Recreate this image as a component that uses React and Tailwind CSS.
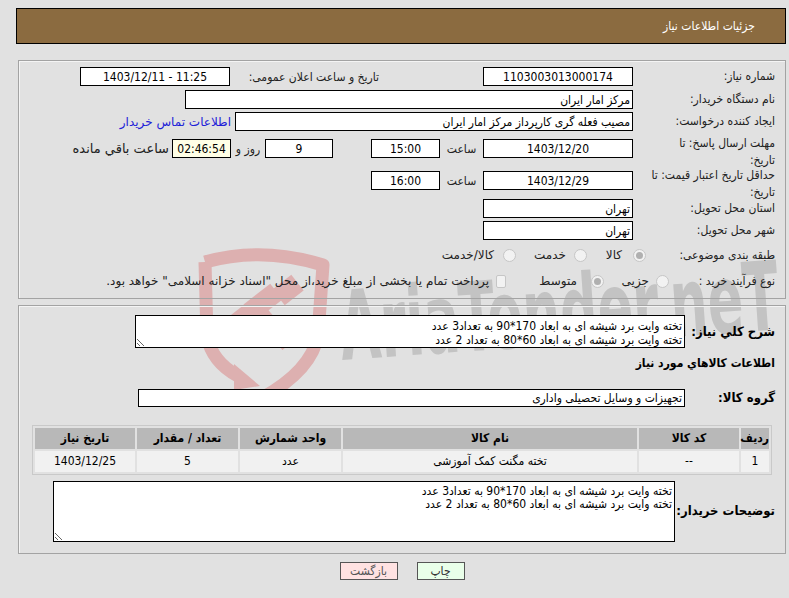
import React from "react";

const F = { fontFamily: '"DejaVu Sans Condensed","DejaVu Sans",sans-serif' };
const W = { fontFamily: '"DejaVu Sans",sans-serif' };

function Box({ w, children, center = true, bg = "bg-white", h = "h-[19px]", ltr = false }) {
  return (
    <div
      dir={ltr ? "ltr" : undefined}
      className={`${w} ${h} ${bg} border border-black flex items-center shrink-0 whitespace-nowrap overflow-hidden text-[12px] text-black ${center ? "justify-center" : "justify-start pr-[2px]"}`}
    >
      {children}
    </div>
  );
}

function Radio({ checked }) {
  return (
    <span className="w-[13px] h-[13px] rounded-full border border-[#c6c6c6] bg-[#f2f2f2] flex items-center justify-center shrink-0">
      {checked ? <span className="w-[7px] h-[7px] rounded-full bg-[#b0b0b0]" /> : null}
    </span>
  );
}

function Label({ children, className = "" }) {
  return (
    <div className={`w-[142px] shrink-0 text-[12px] text-[#222] leading-[17px] ${className}`}>{children}</div>
  );
}

/* watermark: svg placed at page (190,240); local coords = page - (190,240) */
function Watermark() {
  const c = "#ddb0b0";
  return (
    <svg
      dir="ltr"
      style={{ direction: "ltr" }}
      className="absolute left-[190px] top-[240px] pointer-events-none"
      width="600"
      height="190"
      viewBox="0 0 600 190"
    >
      <g fill="none" stroke={c} strokeWidth="13" strokeLinejoin="round" strokeLinecap="butt">
        <path d="M15 22 Q72 6 133 25 L128 95 Q122 130 72 158" />
        <path d="M15 22 L17 96 Q22 122 48 136" />
      </g>
      <path d="M44 124 L70 146 L44 150 Z" fill={c} />
      <g fill={c}>
        <rect x="38" y="70" width="26" height="20" transform="rotate(-38 51 80)" />
        <rect x="56" y="52" width="34" height="20" transform="rotate(-38 73 62)" />
        <rect x="86" y="40" width="24" height="20" transform="rotate(-38 98 50)" />
        <rect x="60" y="80" width="46" height="15" transform="rotate(50 83 88)" />
      </g>
      <text
        x="152"
        y="120"
        textAnchor="start"
        textLength="440"
        lengthAdjust="spacingAndGlyphs"
        fill="#c3c3c3"
        fontFamily="DejaVu Sans Condensed, DejaVu Sans, sans-serif"
        fontWeight="bold"
        fontSize="96"
        transform="rotate(-4 152 120)"
      >
        AriaTender.neT
      </text>
    </svg>
  );
}

export default function App() {
  return (
    <div
      dir="rtl"
      style={F}
      className="relative w-[789px] h-[598px] bg-[#e1e1e1] overflow-hidden text-[12px] text-[#222]"
    >
      <Watermark />
      <div className="relative">
        {/* Header */}
        <div className="mt-[8px] ml-[16px] mr-[3px] h-[36px] bg-[#8b6b40] border border-black flex items-center pr-[30px] text-white text-[12px]">
          جزئیات اطلاعات نیاز
        </div>

        {/* Panel 1 */}
        <div className="mt-[16px] ml-[18px] mr-[3px] h-[239px] border border-[#a3a3a3] shadow-[inset_1px_1px_0_#f4f4f4] pr-[10px] flex flex-col">
          <div className="mt-[6px] h-[19px] flex items-center">
            <Label>شماره نیاز:</Label>
            <Box w="w-[150px]">1103003013000174</Box>
            <div className="mr-[104px] w-[149px] shrink-0 whitespace-nowrap">تاریخ و ساعت اعلان عمومی:</div>
            <Box w="w-[150px]" ltr>1403/12/11 - 11:25</Box>
          </div>
          <div className="mt-[4px] h-[19px] flex items-center">
            <Label>نام دستگاه خریدار:</Label>
            <Box w="w-[448px]" center={false}>مرکز امار ایران</Box>
          </div>
          <div className="mt-[3px] h-[19px] flex items-center">
            <Label>ایجاد کننده درخواست:</Label>
            <Box w="w-[398px]" center={false}>مصیب فعله گری کارپرداز مرکز امار ایران</Box>
            <span className="mr-[4px] text-[#2020d8] whitespace-nowrap" style={W}>اطلاعات تماس خریدار</span>
          </div>
          <div className="mt-[8px] h-[28px] flex items-start">
            <Label className="-mt-[4px]">
              مهلت ارسال پاسخ: تا
              <br />
              تاریخ:
            </Label>
            <Box w="w-[150px]">1403/12/20</Box>
            <div className="w-[43px] h-[19px] flex items-center justify-center shrink-0">ساعت</div>
            <Box w="w-[69px]">15:00</Box>
            <div className="mr-[38px]" />
            <Box w="w-[68px]">9</Box>
            <div className="w-[34px] h-[19px] flex items-center justify-center shrink-0">روز و</div>
            <Box w="w-[59px]" bg="bg-[#ffffe6]">02:46:54</Box>
            <div className="mr-[3px] h-[19px] flex items-center whitespace-nowrap text-[13px]" style={W}>ساعت باقي مانده</div>
          </div>
          <div className="mt-[4px] h-[26px] flex items-start">
            <Label className="-mt-[4px]">
              حداقل تاریخ اعتبار قیمت: تا
              <br />
              تاریخ:
            </Label>
            <Box w="w-[150px]">1403/12/29</Box>
            <div className="w-[43px] h-[19px] flex items-center justify-center shrink-0">ساعت</div>
            <Box w="w-[69px]">16:00</Box>
          </div>
          <div className="mt-[2px] h-[19px] flex items-center">
            <Label>استان محل تحویل:</Label>
            <Box w="w-[150px]" center={false}>تهران</Box>
          </div>
          <div className="mt-[3px] h-[19px] flex items-center">
            <Label>شهر محل تحویل:</Label>
            <Box w="w-[150px]" center={false}>تهران</Box>
          </div>
          <div className="mt-[6px] h-[18px] flex items-center">
            <div className="w-[129px] shrink-0 whitespace-nowrap">طبقه بندی موضوعی:</div>
            <Radio checked />
            <span className="mr-[11px] w-[35px] shrink-0" style={W}>کالا</span>
            <Radio />
            <span className="mr-[8px] w-[50px] shrink-0" style={W}>خدمت</span>
            <Radio />
            <span className="mr-[9px] whitespace-nowrap" style={W}>کالا/خدمت</span>
          </div>
          <div className="mt-[8px] h-[18px] flex items-center">
            <div className="shrink-0 w-[106px] whitespace-nowrap">نوع فرآیند خرید :</div>
            <Radio />
            <span className="mr-[7px] w-[45px] shrink-0" style={W}>جزیی</span>
            <Radio checked />
            <span className="mr-[14px] w-[71px] shrink-0" style={W}>متوسط</span>
            <span className="w-[10px] h-[13px] rounded-[2px] border border-[#c6c6c6] bg-[#f2f2f2] shrink-0" />
            <span className="mr-[7px] whitespace-nowrap" style={W}>
              پرداخت تمام یا بخشی از مبلغ خرید،از محل "اسناد خزانه اسلامی" خواهد بود.
            </span>
          </div>
        </div>

        {/* Panel 2 */}
        <div className="mt-[6px] ml-[18px] mr-[3px] h-[249px] border border-[#a3a3a3] shadow-[inset_1px_1px_0_#f4f4f4] pr-[10px] flex flex-col">
          <div className="mt-[9px] flex items-center">
            <div className="w-[90px] shrink-0 font-bold text-[13px] text-black">شرح کلي نياز:</div>
            <textarea
              readOnly
              dir="rtl"
              className="w-[550px] h-[33px] border border-black bg-white text-[12px] leading-[14px] px-[2px] pt-[3px] overflow-hidden text-black outline-none"
              style={F}
              value={"تخته وایت برد شیشه ای به ابعاد 170*90 به تعداد3 عدد\nتخته وایت برد شیشه ای به ابعاد 60*80 به تعداد 2 عدد"}
            />
          </div>
          <div className="mt-[6px] font-bold text-[12px] text-black leading-[18px]">اطلاعات کالاهاي مورد نياز</div>
          <div className="mt-[16px] flex items-center">
            <div className="w-[90px] shrink-0 font-bold text-[13px] text-black">گروه کالا:</div>
            <Box w="w-[547px]" h="h-[18px]" center={false}>تجهیزات و وسایل تحصیلی واداری</Box>
          </div>
          <div className="mt-[17px] mr-[3px]">
            <table className="w-[740px] table-fixed border border-[#c9c9c9] border-separate border-spacing-[2px] text-[12px]">
              <colgroup>
                <col className="w-[28px]" />
                <col className="w-[100px]" />
                <col className="w-[294px]" />
                <col className="w-[101px]" />
                <col className="w-[101px]" />
                <col className="w-[100px]" />
              </colgroup>
              <thead>
                <tr className="h-[21px] bg-[#b8b8b8] font-bold text-black">
                  <th className="font-bold p-0">ردیف</th>
                  <th className="font-bold p-0">کد کالا</th>
                  <th className="font-bold p-0">نام کالا</th>
                  <th className="font-bold p-0">واحد شمارش</th>
                  <th className="font-bold p-0">تعداد / مقدار</th>
                  <th className="font-bold p-0">تاریخ نیاز</th>
                </tr>
              </thead>
              <tbody>
                <tr className="h-[21px] bg-[#f1f1f1] text-black text-center">
                  <td className="p-0">1</td>
                  <td className="p-0">--</td>
                  <td className="p-0">تخته مگنت کمک آموزشی</td>
                  <td className="p-0">عدد</td>
                  <td className="p-0">5</td>
                  <td className="p-0">1403/12/25</td>
                </tr>
              </tbody>
            </table>
          </div>
          <div className="mt-[6px] flex items-center">
            <div className="w-[100px] shrink-0 font-bold text-[13px] text-black">توضیحات خریدار:</div>
            <textarea
              readOnly
              dir="rtl"
              className="w-[622px] h-[61px] border border-black bg-white text-[12px] leading-[13px] px-[2px] pt-[3px] overflow-hidden text-black outline-none"
              style={F}
              value={"تخته وایت برد شیشه ای به ابعاد 170*90 به تعداد3 عدد\nتخته وایت برد شیشه ای به ابعاد 60*80 به تعداد 2 عدد"}
            />
          </div>
        </div>

        {/* Buttons */}
        <div className="mt-[8px] ml-[18px] mr-[3px] flex justify-center gap-[19px]">
          <button className="w-[48px] h-[18px] border border-[#555] bg-[#e9ffe9] text-[12px] text-[#333] flex items-center justify-center" style={F}>
            چاپ
          </button>
          <button className="w-[58px] h-[18px] border border-[#555] bg-[#ffe2e2] text-[12px] text-[#555] flex items-center justify-center" style={F}>
            بازگشت
          </button>
        </div>
      </div>
    </div>
  );
}
